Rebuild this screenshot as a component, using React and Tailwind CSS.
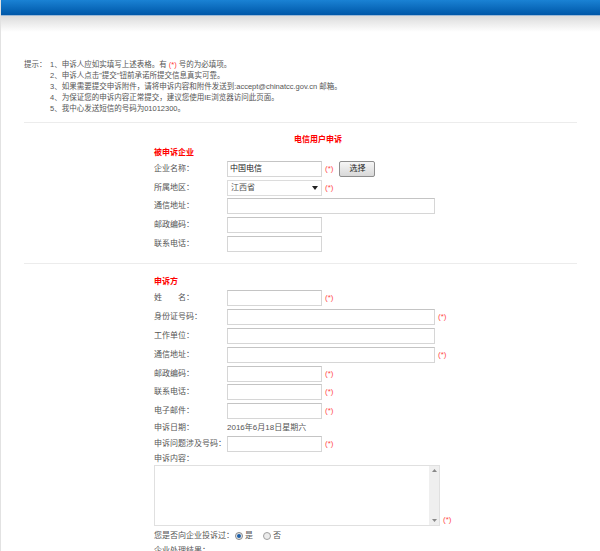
import React from 'react';

const font = { fontFamily: '"Liberation Sans", "Noto Sans CJK SC", sans-serif' };

const Star = () => <span className="ml-[3px] text-[8px] text-[#ff4a4a] whitespace-nowrap">(*)</span>;

const Input = ({ w = 'w-[95px]', value = '' }) => (
  <div className={`${w} h-[16px] shrink-0 border border-[#d6d6d6] border-t-[#c4c4c4] bg-white text-[8px] leading-[14px] text-[#222] px-[2px]`}>
    {value}
  </div>
);

const Row = ({ label, children, h = 'h-[18.6px]' }) => (
  <div className={`flex items-center ${h}`}>
    <div className="w-[73px] shrink-0 text-[8px] text-[#555] whitespace-nowrap">{label}</div>
    {children}
  </div>
);

const tips = [
  <>1、申诉人应如实填写上述表格。有 <span className="text-[#ff3333]">(*)</span> 号的为必填项。</>,
  '2、申诉人点击"提交"钮前承诺所提交信息真实可靠。',
  '3、如果需要提交申诉附件，请将申诉内容和附件发送到:accept@chinatcc.gov.cn 邮箱。',
  '4、为保证您的申诉内容正常提交，建议您使用IE浏览器访问此页面。',
  '5、我中心发送短信的号码为01012300。',
];

export default function App() {
  return (
    <div className="w-[600px] h-[551px] overflow-hidden bg-white border-l border-[#e2e2e2]" style={font}>
      <div className="h-[16px] bg-gradient-to-b from-[#1a82d4] to-[#0057a8] border-b border-[#9bb8d6]" />
      <div className="h-[16px] bg-gradient-to-b from-[#dcdcdc] to-white" />

      <div className="pt-[27px] px-[23px]">
        <div className="flex text-[7.5px] text-[#555] leading-[11px]">
          <div className="w-[26px] shrink-0">提示：</div>
          <div>
            {tips.map((t, i) => (
              <div key={i}>{t}</div>
            ))}
          </div>
        </div>

        <div className="mt-[8px] border-t border-[#ececec]" />

        <div className="pl-[130px]">
          <div className="pt-[11px] pl-[140px] text-[8px] font-bold text-[#ff0000] leading-[12px]">电信用户申诉</div>
          <div className="pt-[1px] text-[8px] font-bold text-[#ff0000] leading-[12px]">被申诉企业</div>
          <div className="pt-[1px]">
            <Row label="企业名称：">
              <Input value="中国电信" />
              <Star />
              <div className="ml-[6px] w-[36px] h-[16px] rounded-[2px] border border-[#8e8e8e] bg-gradient-to-b from-[#f6f6f6] to-[#d8d8d8] text-[8px] text-[#222] flex items-center justify-center">
                选择
              </div>
            </Row>
            <Row label="所属地区：">
              <div className="w-[95px] h-[16px] border border-[#dcdcdc] bg-white text-[8px] text-[#555] px-[3px] flex items-center justify-between">
                <span>江西省</span>
                <svg width="6" height="4" viewBox="0 0 6 4"><path d="M0 0h6L3 4z" fill="#222" /></svg>
              </div>
              <Star />
            </Row>
            <Row label="通信地址：">
              <Input w="w-[208px]" />
            </Row>
            <Row label="邮政编码：">
              <Input />
            </Row>
            <Row label="联系电话：">
              <Input />
            </Row>
          </div>
        </div>

        <div className="mt-[10px] border-t border-[#ececec]" />

        <div className="pl-[130px]">
          <div className="pt-[12px] text-[8px] font-bold text-[#ff0000] leading-[12px]">申诉方</div>
          <div className="pt-[1px]">
            <Row label={<span>姓<span className="inline-block w-[16px]" />名：</span>} h="h-[18.8px]">
              <Input />
              <Star />
            </Row>
            <Row label="身份证号码：" h="h-[18.8px]">
              <Input w="w-[208px]" />
              <Star />
            </Row>
            <Row label="工作单位：" h="h-[18.8px]">
              <Input w="w-[208px]" />
            </Row>
            <Row label="通信地址：" h="h-[18.8px]">
              <Input w="w-[208px]" />
              <Star />
            </Row>
            <Row label="邮政编码：" h="h-[18.8px]">
              <Input />
              <Star />
            </Row>
            <Row label="联系电话：" h="h-[18.8px]">
              <Input />
              <Star />
            </Row>
            <Row label="电子邮件：" h="h-[18.8px]">
              <Input />
              <Star />
            </Row>
            <Row label="申诉日期：" h="h-[15px]">
              <span className="text-[8px] text-[#555]">2016年6月18日星期六</span>
            </Row>
            <Row label="申诉问题涉及号码：" h="h-[17px]">
              <Input />
              <Star />
            </Row>
            <div className="h-[12px] flex items-center text-[8px] text-[#555]">申诉内容：</div>
            <div className="flex items-end">
              <div className="w-[286px] h-[61px] border border-[#e0e0e0] bg-white flex justify-end">
                <div className="w-[10px] h-full bg-[#efefef] flex flex-col items-center justify-between py-[3px]">
                  <svg width="5" height="3" viewBox="0 0 5 3"><path d="M0 3h5L2.5 0z" fill="#888" /></svg>
                  <svg width="5" height="3" viewBox="0 0 5 3"><path d="M0 0h5L2.5 3z" fill="#888" /></svg>
                </div>
              </div>
              <Star />
            </div>
            <div className="mt-[1px] h-[18px] flex items-center text-[8px] text-[#555]">
              <span>您是否向企业投诉过：</span>
              <span className="ml-[1px] w-[8px] h-[8px] rounded-full border border-[#8a8a8a] bg-[#e8e8e8] flex items-center justify-center">
                <span className="w-[4px] h-[4px] rounded-full bg-[#1d5fa8]" />
              </span>
              <span className="ml-[2px]">是</span>
              <span className="ml-[10px] w-[8px] h-[8px] rounded-full border border-[#a0a0a0] bg-[#ececec]" />
              <span className="ml-[2px]">否</span>
            </div>
            <div className="text-[8px] leading-[12px] text-[#555]">企业处理结果：</div>
          </div>
        </div>
      </div>
    </div>
  );
}
